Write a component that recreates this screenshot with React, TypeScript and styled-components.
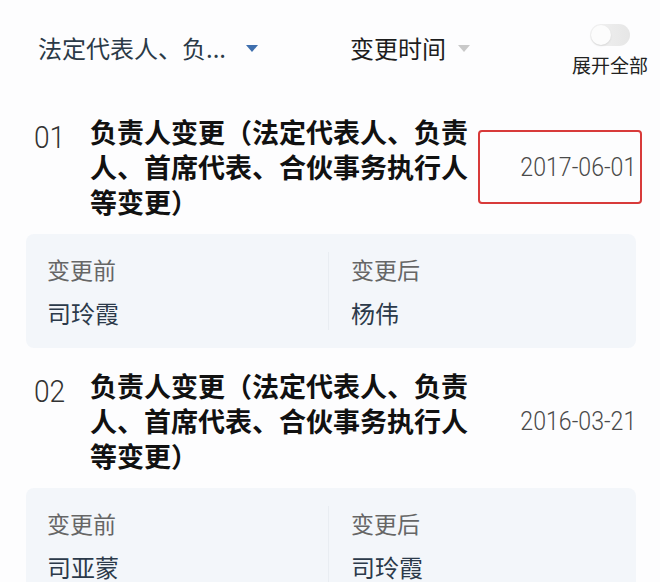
import React from 'react';
import styled, { createGlobalStyle } from 'styled-components';

type Change = {
    index: string;
    title: string;
    date: string;
    before: string;
    after: string;
    highlight?: boolean;
};

const changes: Change[] = [
    {
        index: '01',
        title: '负责人变更（法定代表人、负责人、首席代表、合伙事务执行人等变更）',
        date: '2017-06-01',
        before: '司玲霞',
        after: '杨伟',
        highlight: true,
    },
    {
        index: '02',
        title: '负责人变更（法定代表人、负责人、首席代表、合伙事务执行人等变更）',
        date: '2016-03-21',
        before: '司亚蒙',
        after: '司玲霞',
    },
];

const GlobalStyle = createGlobalStyle`
    html, body {
        margin: 0;
        padding: 0;
        background: #fdfdfe;
        overflow: hidden;
    }
    body {
        font-family: 'Noto Sans CJK SC', 'Noto Sans', sans-serif;
        color: #222;
    }
`;

const App: React.FC = () => {
    return (
        <>
            <GlobalStyle />
            <Page>
                <Header>
                    <Filter active>
                        法定代表人、负...
                        <Caret active />
                    </Filter>
                    <Filter>
                        变更时间
                        <Caret />
                    </Filter>
                    <ExpandAll>
                        <Toggle>
                            <Knob />
                        </Toggle>
                        <ExpandLabel>展开全部</ExpandLabel>
                    </ExpandAll>
                </Header>
                {changes.map((item) => (
                    <Item key={item.index}>
                        <ItemHead>
                            <Index>
                                <Narrow>{item.index}</Narrow>
                            </Index>
                            <Title>{item.title}</Title>
                            <DateBox highlight={!!item.highlight}>
                                <Narrow>{item.date}</Narrow>
                            </DateBox>
                        </ItemHead>
                        <Detail>
                            <DetailCol>
                                <DetailLabel>变更前</DetailLabel>
                                <DetailValue>{item.before}</DetailValue>
                            </DetailCol>
                            <DetailCol divided>
                                <DetailLabel>变更后</DetailLabel>
                                <DetailValue>{item.after}</DetailValue>
                            </DetailCol>
                        </Detail>
                    </Item>
                ))}
            </Page>
        </>
    );
};

const Page = styled.div`
    width: 660px;
    height: 582px;
    overflow: hidden;
`;

const Header = styled.div`
    display: flex;
    align-items: flex-start;
    height: 104px;
    padding: 0 10px 0 38px;
    box-sizing: border-box;
`;

const Filter = styled.div<{ active?: boolean }>`
    display: flex;
    align-items: center;
    width: ${(props) => (props.active ? '312px' : '222px')};
    margin-top: 32px;
    font-size: 24px;
    line-height: 32px;
    color: ${(props) => (props.active ? '#2b3a47' : '#1e1e1e')};
`;

const Caret = styled.span<{ active?: boolean }>`
    width: 0;
    height: 0;
    margin-left: ${(props) => (props.active ? '20px' : '12px')};
    border-left: 6px solid transparent;
    border-right: 6px solid transparent;
    border-top: 7px solid ${(props) => (props.active ? '#3f6fae' : '#c9c9c9')};
`;

const ExpandAll = styled.div`
    display: flex;
    flex-direction: column;
    align-items: center;
    margin-top: 24px;
`;

const Toggle = styled.div`
    position: relative;
    width: 40px;
    height: 22px;
    border-radius: 11px;
    background: linear-gradient(90deg, #f2f2f2, #e6e6e6);
`;

const Knob = styled.span`
    position: absolute;
    left: 1px;
    top: 1px;
    width: 20px;
    height: 20px;
    border-radius: 50%;
    background: #fcfcfc;
    box-shadow: 0 1px 2px rgba(0, 0, 0, 0.1);
`;

const ExpandLabel = styled.div`
    margin-top: 7px;
    font-size: 19px;
    line-height: 24px;
    color: #222;
`;

const Item = styled.div`
    padding-bottom: 10px;
`;

const ItemHead = styled.div`
    display: flex;
    align-items: center;
    padding: 10px 18px 0 34px;
`;

const Index = styled.div`
    align-self: flex-start;
    width: 56px;
    margin-top: 7px;
    font-family: Roboto, 'Noto Sans', sans-serif;
    font-size: 32px;
    font-weight: 300;
    line-height: 32px;
    color: #333;
`;

const Narrow = styled.span`
    display: inline-block;
    transform: scaleX(0.88);
    transform-origin: left center;
`;

const Title = styled.div`
    width: 380px;
    font-size: 27px;
    font-weight: 700;
    line-height: 35px;
    color: #111;
`;

const DateBox = styled.div<{ highlight: boolean }>`
    display: flex;
    align-items: center;
    justify-content: flex-end;
    margin-left: auto;
    width: 164px;
    height: 74px;
    padding-right: 4px;
    box-sizing: border-box;
    border: 2px solid ${(props) => (props.highlight ? '#d83a3a' : 'transparent')};
    border-radius: 4px;
    font-family: Roboto, 'Noto Sans', sans-serif;
    font-size: 26px;
    font-weight: 300;
    color: #4a4a4a;

    & > span {
        transform: scaleX(0.89);
        transform-origin: right center;
    }
`;

const Detail = styled.div`
    display: grid;
    grid-template-columns: 302px 1fr;
    margin: 15px 24px 0 26px;
    padding: 18px 0 18px;
    border-radius: 8px;
    background: #f3f6fa;
`;

const DetailCol = styled.div<{ divided?: boolean }>`
    display: flex;
    flex-direction: column;
    gap: 10px;
    padding-left: ${(props) => (props.divided ? '22px' : '21px')};
    border-left: ${(props) => (props.divided ? '1px solid #e9edf2' : 'none')};
`;

const DetailLabel = styled.div`
    font-size: 23px;
    line-height: 34px;
    color: #666;
`;

const DetailValue = styled.div`
    font-size: 24px;
    line-height: 34px;
    color: #2c3a4a;
`;

export default App;
